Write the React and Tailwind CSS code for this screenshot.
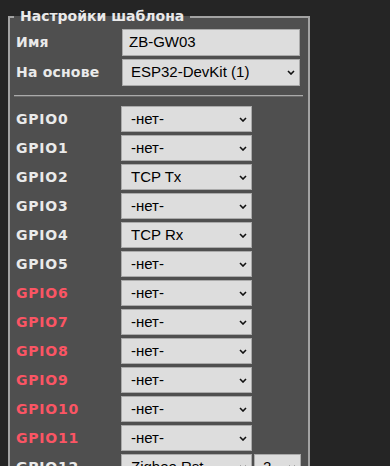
import React from "react";

const Chevron = () => (
  <svg width="8" height="5" viewBox="0 0 8 5" className="shrink-0">
    <path d="M1 1L4 4L7 1" fill="none" stroke="#111" strokeWidth="1.6" />
  </svg>
);

function Sel({ value, className }) {
  return (
    <div
      className={
        "flex items-center justify-between border border-[#aaaaaa] bg-[#dddddd] pr-[4px] text-black " +
        className
      }
      style={{ fontFamily: '"Liberation Sans", Arial, sans-serif' }}
    >
      <span className="truncate">{value}</span>
      <Chevron />
    </div>
  );
}

const rows = [
  ["GPIO0", "-нет-", false],
  ["GPIO1", "-нет-", false],
  ["GPIO2", "TCP Tx", false],
  ["GPIO3", "-нет-", false],
  ["GPIO4", "TCP Rx", false],
  ["GPIO5", "-нет-", false],
  ["GPIO6", "-нет-", true],
  ["GPIO7", "-нет-", true],
  ["GPIO8", "-нет-", true],
  ["GPIO9", "-нет-", true],
  ["GPIO10", "-нет-", true],
  ["GPIO11", "-нет-", true],
  ["GPIO12", "Zigbee Rst", false],
  ["GPIO13", "-нет-", false],
];

export default function App() {
  return (
    <div
      className="min-h-screen bg-[#252525] pl-[8px] pt-[8px] text-[#eaeaea]"
      style={{ fontFamily: '"DejaVu Sans", Verdana, sans-serif' }}
    >
      <fieldset className="w-[302px] border-2 border-[#a3a3a3] bg-[#4f4f4f] px-[4px] pb-[20px]">
        <legend className="px-[6px] text-[14px] font-bold leading-[17px]">
          Настройки шаблона
        </legend>
        <div className="flex flex-col gap-[3px] pt-[4px]">
          <div className="flex h-[27px] items-center">
            <div className="w-[108px] pl-[2px] text-[14px] font-bold tracking-[0.2px]">Имя</div>
            <div
              className="flex h-[27px] w-[178px] items-center border border-[#aaaaaa] bg-[#dddddd] pl-[6px] text-[15px] text-black"
              style={{ fontFamily: '"Liberation Sans", Arial, sans-serif' }}
            >
              ZB-GW03
            </div>
          </div>
          <div className="flex h-[27px] items-center">
            <div className="w-[108px] pl-[2px] text-[14px] font-bold tracking-[0.2px]">На основе</div>
            <Sel value="ESP32-DevKit (1)" className="h-[27px] w-[178px] pl-[8px] text-[15px]" />
          </div>
        </div>
        <div className="mt-[9px] mb-[9px] h-[2px] w-[289px] border-t border-[#aaaaaa] bg-[#6a6a6a]"></div>
        <div className="flex flex-col gap-[3px]">
          {rows.map(([name, val, red]) => (
            <div key={name} className="flex h-[26px] items-center">
              <div
                className={
                  red
                    ? "w-[107px] pl-[2px] text-[14px] font-bold tracking-[0.8px] text-[#fb5564]"
                    : "w-[107px] pl-[2px] text-[14px] font-bold tracking-[0.8px]"
                }
              >
                {name}
              </div>
              <Sel value={val} className="h-[26px] w-[131px] pl-[9px] text-[15px]" />
              {name === "GPIO12" && (
                <Sel value="2" className="ml-[2px] h-[26px] w-[47px] pl-[8px] text-[15px]" />
              )}
            </div>
          ))}
        </div>
      </fieldset>
    </div>
  );
}
